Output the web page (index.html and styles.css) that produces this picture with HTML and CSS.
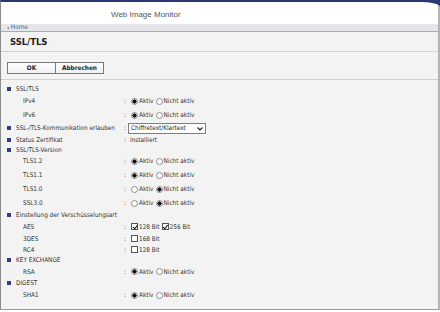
FILE: index.html
```html
<!DOCTYPE html>
<html lang="de">
<head>
<meta charset="utf-8">
<title>SSL/TLS</title>
<link rel="stylesheet" href="styles.css">
</head>
<body>
<div class="frame">
  <header class="top">
    <div class="app-title">Web Image Monitor</div>
    <svg class="corner" width="22" height="6" viewBox="0 0 22 6"><path d="M0 0 H22 V6 C18 3 12 2 0 2 Z" fill="#2b3873"/></svg>
  </header>
  <nav class="crumb"><span class="crumb-arrow">&#9666;</span>Home</nav>
  <main class="page">
    <h1 class="ptitle">SSL/TLS</h1>
    <div class="btnbar">
      <button class="btn btn-ok">OK</button><button class="btn">Abbrechen</button>
    </div>
    <div class="form">
      <div class="row sec"><span class="bullet"></span>SSL/TLS</div>
      <div class="row r14"><span class="lbl sub">IPv4</span><span class="colon">:</span><span class="val"><input type="radio" name="ipv4" checked><span class="opt">Aktiv</span><input type="radio" name="ipv4"><span class="opt">Nicht aktiv</span></span></div>
      <div class="row r14"><span class="lbl sub">IPv6</span><span class="colon">:</span><span class="val"><input type="radio" name="ipv6" checked><span class="opt">Aktiv</span><input type="radio" name="ipv6"><span class="opt">Nicht aktiv</span></span></div>
      <div class="row r12"><span class="lbl"><span class="bullet"></span>SSL-/TLS-Kommunikation erlauben</span><span class="colon tight">:</span><span class="selwrap"><select class="sel"><option>Chiffretext/Klartext</option></select><svg class="chev" width="6" height="4" viewBox="0 0 6 4"><path d="M0.5 0.5 L3 3 L5.5 0.5" fill="none" stroke="#222" stroke-width="1.2"/></svg></span></div>
      <div class="row r11"><span class="lbl"><span class="bullet"></span>Status Zertifikat</span><span class="colon tight">:</span><span class="txt">Installiert</span></div>
      <div class="row r9"><span class="bullet"></span>SSL/TLS-Version</div>
      <div class="row r14"><span class="lbl sub">TLS1.2</span><span class="colon">:</span><span class="val"><input type="radio" name="t12" checked><span class="opt">Aktiv</span><input type="radio" name="t12"><span class="opt">Nicht aktiv</span></span></div>
      <div class="row r14"><span class="lbl sub">TLS1.1</span><span class="colon">:</span><span class="val"><input type="radio" name="t11" checked><span class="opt">Aktiv</span><input type="radio" name="t11"><span class="opt">Nicht aktiv</span></span></div>
      <div class="row r14"><span class="lbl sub">TLS1.0</span><span class="colon">:</span><span class="val"><input type="radio" name="t10"><span class="opt">Aktiv</span><input type="radio" name="t10" checked><span class="opt">Nicht aktiv</span></span></div>
      <div class="row r14"><span class="lbl sub">SSL3.0</span><span class="colon">:</span><span class="val"><input type="radio" name="s30"><span class="opt">Aktiv</span><input type="radio" name="s30" checked><span class="opt">Nicht aktiv</span></span></div>
      <div class="row sec"><span class="bullet"></span>Einstellung der Verschüsselungsart</div>
      <div class="row r13"><span class="lbl sub">AES</span><span class="colon">:</span><span class="val"><input type="checkbox" checked><span class="opt">128 Bit</span><input class="cb2" type="checkbox" checked><span class="opt">256 Bit</span></span></div>
      <div class="row r11"><span class="lbl sub">3DES</span><span class="colon">:</span><span class="val"><input type="checkbox"><span class="opt">168 Bit</span></span></div>
      <div class="row r11"><span class="lbl sub">RC4</span><span class="colon">:</span><span class="val"><input type="checkbox"><span class="opt">128 Bit</span></span></div>
      <div class="row sec"><span class="bullet"></span>KEY EXCHANGE</div>
      <div class="row r13"><span class="lbl sub">RSA</span><span class="colon">:</span><span class="val"><input type="radio" name="rsa" checked><span class="opt">Aktiv</span><input type="radio" name="rsa"><span class="opt">Nicht aktiv</span></span></div>
      <div class="row sec"><span class="bullet"></span>DIGEST</div>
      <div class="row r14"><span class="lbl sub">SHA1</span><span class="colon">:</span><span class="val"><input type="radio" name="sha" checked><span class="opt">Aktiv</span><input type="radio" name="sha"><span class="opt">Nicht aktiv</span></span></div>
    </div>
  </main>
</div>
</body>
</html>
```
FILE: styles.css
```css
* { box-sizing: border-box; }
html, body { margin: 0; padding: 0; background: #ffffff; }
body { width: 440px; height: 312px; overflow: hidden; }

.frame {
  position: relative;
  width: 440px;
  height: 310px;
  border-top: 2px solid #2b3873;
  border-left: 1px solid #8c8c8c;
  border-right: 2px solid #b4b4b4;
  border-bottom: 1px solid #9a9a9a;
  background: #f3f3f3;
  display: flex;
  flex-direction: column;
  font-family: "DejaVu Sans Condensed", "DejaVu Sans", "Liberation Sans", sans-serif;
  color: #333;
}

.top {
  height: 22px;
  background: #ffffff;
  display: flex;
  align-items: center;
  padding-left: 110px;
}
.app-title {
  font-family: "Liberation Sans", Arial, sans-serif;
  font-size: 8px;
  color: #555;
  padding-top: 3px;
}
.corner { position: absolute; top: -2px; right: -2px; }

.crumb {
  height: 8px;
  background: #e6e6ea;
  border-bottom: 1px solid #aaaab0;
  font-size: 6.4px;
  line-height: 7px;
  color: #4d5d97;
  padding-left: 6px;
}
.crumb-arrow { font-size: 4px; margin-right: 2px; }

.page { flex: 1; display: flex; flex-direction: column; }

.ptitle {
  margin: 0;
  height: 20px;
  font-size: 9.4px;
  font-weight: bold;
  color: #222;
  padding-left: 9px;
  line-height: 20px;
  border-bottom: 1px solid #d2d2d4;
}

.btnbar {
  height: 28px;
  border-bottom: 1px solid #cfcfd2;
  padding: 10px 0 0 6px;
  display: flex;
}
.btn {
  font-family: inherit;
  font-size: 6.4px;
  font-weight: bold;
  color: #222;
  height: 12px;
  width: 49px;
  padding: 0;
  border: 1px solid #7a7a7a;
  background: linear-gradient(#ffffff, #f0f0f0);
  border-radius: 0;
  line-height: 10px;
}
.btn + .btn { margin-left: -1px; }

.form { padding: 4px 0 0 6px; font-size: 6.4px; }

.row { display: flex; align-items: center; white-space: nowrap; }
.sec { height: 10px; }
.r9 { height: 9px; }
.r11 { height: 11px; }
.r12 { height: 12px; }
.r13 { height: 13px; }
.r14 { height: 14px; }

.bullet {
  display: inline-block;
  width: 4px;
  height: 4px;
  background: #2e3d86;
  margin-right: 5px;
  flex: none;
}
.lbl { width: 117px; display: flex; align-items: center; }
.lbl.sub { padding-left: 16px; }
.colon { width: 7px; }
.colon.tight { width: 4px; }
.val { display: flex; align-items: center; }
.txt { padding-left: 2px; }
.opt { margin: 0 1px 0 1px; }

input[type="radio"], input[type="checkbox"] {
  -webkit-appearance: none;
  appearance: none;
  margin: 0;
  width: 7px;
  height: 7px;
  background: #fff;
  flex: none;
  position: relative;
}
input[type="radio"] {
  border: 1px solid #8d8d8d;
  border-radius: 50%;
}
input[type="radio"]:checked {
  background: radial-gradient(circle, #111 0 1.9px, #fff 2.3px);
}
input[type="checkbox"] {
  border: 1px solid #555;
  width: 7px;
  height: 7px;
}
input[type="checkbox"]:checked::after {
  content: "";
  position: absolute;
  left: 1.5px;
  top: 0;
  width: 2px;
  height: 3.5px;
  border: solid #111;
  border-width: 0 1.2px 1.2px 0;
  transform: rotate(40deg);
}
.val input + .opt + input { margin-left: 1px; }
.val input.cb2 { margin-left: 3px; }

.selwrap { position: relative; display: inline-flex; }
.sel {
  -webkit-appearance: none;
  appearance: none;
  font-family: inherit;
  font-size: 6.4px;
  color: #222;
  width: 78px;
  height: 11px;
  padding: 0 0 0 2px;
  border: 1px solid #7d7d7d;
  border-radius: 0;
  background: #fff;
  line-height: 9px;
}
.chev { position: absolute; right: 3px; top: 4px; }
```
